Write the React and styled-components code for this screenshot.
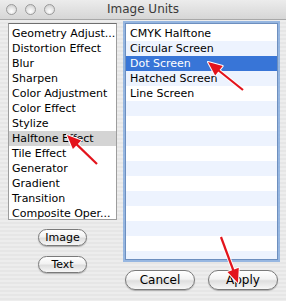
import styled, { createGlobalStyle } from "styled-components";

const GlobalStyle = createGlobalStyle`
  html, body {
    margin: 0;
    padding: 0;
  }
  body {
    font-family: "DejaVu Sans", "Liberation Sans", sans-serif;
  }
`;

const categories = [
  "Geometry Adjust...",
  "Distortion Effect",
  "Blur",
  "Sharpen",
  "Color Adjustment",
  "Color Effect",
  "Stylize",
  "Halftone Effect",
  "Tile Effect",
  "Generator",
  "Gradient",
  "Transition",
  "Composite Oper...",
];

const units = [
  "CMYK Halftone",
  "Circular Screen",
  "Dot Screen",
  "Hatched Screen",
  "Line Screen",
];

const stripeCount = 16;

export default function App() {
  const rows = Array.from({ length: stripeCount }, (_, i) => units[i] || "");
  return (
    <>
      <GlobalStyle />
      <Window>
        <TitleBar>
          <Lights>
            <Light />
            <Light />
            <Light />
          </Lights>
          <Title>Image Units</Title>
        </TitleBar>
        <Body>
          <LeftColumn>
            <CategoryList>
              {categories.map((c) => (
                <CategoryRow key={c} $selected={c === "Halftone Effect"}>
                  {c}
                </CategoryRow>
              ))}
            </CategoryList>
            <SmallButton>Image</SmallButton>
            <SmallButton>Text</SmallButton>
          </LeftColumn>
          <RightColumn>
            <UnitList>
              {rows.map((u, i) => (
                <UnitRow key={i} $odd={i % 2 === 1} $selected={i === 2}>
                  {u}
                </UnitRow>
              ))}
            </UnitList>
            <ButtonBar>
              <PushButton>Cancel</PushButton>
              <PushButton>Apply</PushButton>
            </ButtonBar>
          </RightColumn>
        </Body>
        <Arrows width="286" height="301" viewBox="0 0 286 301">
          <Arrow x1="97" y1="164" x2="67" y2="135" />
          <Arrow x1="243" y1="90" x2="208" y2="62" />
          <Arrow x1="221" y1="237" x2="238" y2="283" />
        </Arrows>
      </Window>
    </>
  );
}

function Arrow({ x1, y1, x2, y2 }) {
  const dx = x2 - x1;
  const dy = y2 - y1;
  const len = Math.hypot(dx, dy);
  const ux = dx / len;
  const uy = dy / len;
  const hl = 14;
  const hw = 6;
  const bx = x2 - ux * hl;
  const by = y2 - uy * hl;
  const p1 = `${bx - uy * hw},${by + ux * hw}`;
  const p2 = `${bx + uy * hw},${by - ux * hw}`;
  const head = `${x2},${y2} ${p1} ${p2}`;
  return (
    <g>
      <line x1={x1} y1={y1} x2={bx} y2={by} stroke="#fff" strokeWidth="4" />
      <polygon points={head} fill="#fff" stroke="#fff" strokeWidth="2" strokeLinejoin="round" />
      <line x1={x1} y1={y1} x2={bx + ux * 2} y2={by + uy * 2} stroke="#e3141c" strokeWidth="2.2" />
      <polygon points={head} fill="#e3141c" />
    </g>
  );
}

const Window = styled.div`
  position: relative;
  width: 286px;
  height: 301px;
  overflow: hidden;
  display: flex;
  flex-direction: column;
  background: repeating-linear-gradient(
    to bottom,
    #ededed 0px,
    #ededed 2px,
    #e6e6e6 2px,
    #e6e6e6 4px
  );
`;

const TitleBar = styled.div`
  height: 19px;
  flex: none;
  display: flex;
  align-items: center;
  position: relative;
  border-bottom: 1px solid #a8a8a8;
  background: linear-gradient(to bottom, #ececec, #d6d6d6);
`;

const Lights = styled.div`
  display: flex;
  gap: 8px;
  padding-left: 6px;
`;

const Light = styled.div`
  width: 11px;
  height: 11px;
  border-radius: 50%;
  border: 1px solid #9a9a9a;
  background: radial-gradient(circle at 50% 70%, #ffffff 0%, #e4e4e4 50%, #c4c4c4 100%);
  box-sizing: border-box;
`;

const Title = styled.div`
  position: absolute;
  left: 0;
  right: 0;
  text-align: center;
  font-size: 12px;
  color: #3a3a3a;
  line-height: 19px;
`;

const Body = styled.div`
  display: flex;
  gap: 8px;
  padding: 3px 8px 0 8px;
`;

const LeftColumn = styled.div`
  width: 109px;
  display: flex;
  flex-direction: column;
  align-items: center;
`;

const CategoryList = styled.div`
  align-self: stretch;
  height: 197px;
  box-sizing: border-box;
  background: #fff;
  border: 1px solid #9d9d9d;
  border-top-color: #6f6f6f;
  padding-top: 2px;
  margin-bottom: 9px;
`;

const CategoryRow = styled.div`
  height: 15px;
  line-height: 15px;
  padding-left: 3px;
  font-size: 11px;
  color: #000;
  white-space: nowrap;
  background: ${(p) => (p.$selected ? "#d4d4d4" : "transparent")};
`;

const RightColumn = styled.div`
  width: 153px;
  display: flex;
  flex-direction: column;
`;

const UnitList = styled.div`
  height: 237px;
  box-sizing: border-box;
  background: #fff;
  border: 1px solid #6d8fbf;
  box-shadow: 0 0 0 2px rgba(122, 164, 220, 0.75);
  padding-top: 2px;
  overflow: hidden;
  margin-bottom: 10px;
`;

const UnitRow = styled.div`
  height: 15px;
  line-height: 15px;
  padding-left: 4px;
  font-size: 11px;
  white-space: nowrap;
  color: ${(p) => (p.$selected ? "#fff" : "#000")};
  background: ${(p) => (p.$selected ? "#3875d7" : p.$odd ? "#edf3fe" : "#fff")};
`;

const ButtonBar = styled.div`
  display: flex;
  justify-content: space-between;
`;

const buttonBase = `
  box-sizing: border-box;
  border: 1px solid #7a7a7a;
  border-radius: 10px;
  background: linear-gradient(to bottom, #ffffff 0%, #f2f2f2 45%, #dedede 55%, #f7f7f7 100%);
  box-shadow: 0 1px 1px rgba(0, 0, 0, 0.25);
  font-family: "DejaVu Sans", "Liberation Sans", sans-serif;
  color: #000;
  padding: 0;
  display: flex;
  align-items: center;
  justify-content: center;
`;

const SmallButton = styled.button`
  ${buttonBase}
  width: 49px;
  height: 17px;
  font-size: 11px;
  margin-bottom: 10px;
`;

const PushButton = styled.button`
  ${buttonBase}
  width: 70px;
  height: 20px;
  font-size: 12px;
`;

const Arrows = styled.svg`
  position: absolute;
  left: 0;
  top: 0;
  pointer-events: none;
`;
